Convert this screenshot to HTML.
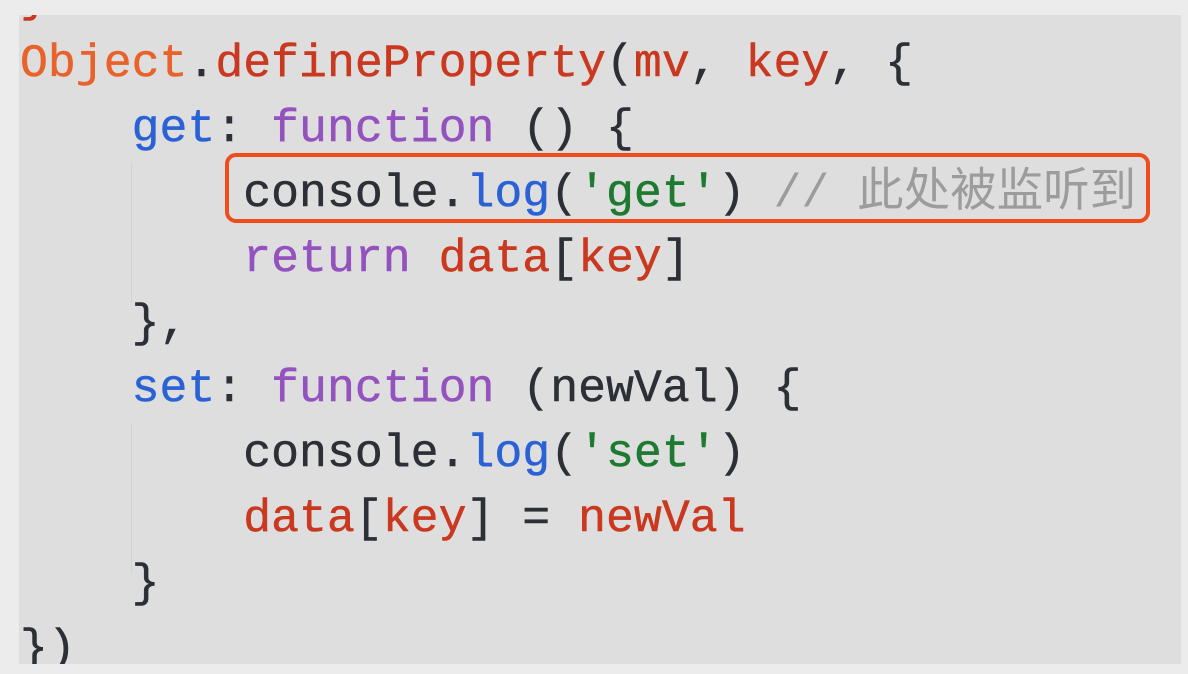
<!DOCTYPE html>
<html><head><meta charset="utf-8"><style>
body{margin:0;width:1188px;height:674px;background:#ececec;overflow:hidden;position:relative}
.panel{position:absolute;left:19px;top:15px;width:1162px;height:649px;background:#dedede;overflow:hidden}
.code{position:absolute;left:1px;top:-49px;font-family:"Liberation Mono","Noto Sans CJK SC",monospace;font-size:46.5px;line-height:65px;white-space:pre;color:#2c3036;-webkit-text-stroke:0.5px currentColor}
.o{color:#e8622a}.r{color:#c9381f}.b{color:#2a62d6}.p{color:#9452bf}.g{color:#1d7a30}.c{color:#9c9c9c;-webkit-text-stroke:0}
.guide{position:absolute;width:1px;background:#d2d2d2}
.box{position:absolute;left:206px;top:138px;width:917px;height:62px;border:4px solid #ee4c1c;border-radius:11px}
</style></head><body>
<div class="panel">
<div class="guide" style="left:112px;top:148px;height:140px"></div>
<div class="guide" style="left:112px;top:408px;height:150px"></div>
<div class="code"><span class="r">}</span>
<span class="o">Object</span>.<span class="r">defineProperty</span>(<span class="r">mv</span>, <span class="r">key</span>, {
    <span class="b">get</span>: <span class="p">function</span> () {
        console.<span class="b">log</span>(<span class="g">'get'</span>) <span class="c">// 此处被监听到</span>
        <span class="p">return</span> <span class="r">data</span>[<span class="r">key</span>]
    },
    <span class="b">set</span>: <span class="p">function</span> (newVal) {
        console.<span class="b">log</span>(<span class="g">'set'</span>)
        <span class="r">data</span>[<span class="r">key</span>] = <span class="r">newVal</span>
    }
})</div>
<div class="box"></div>
</div>
</body></html>
